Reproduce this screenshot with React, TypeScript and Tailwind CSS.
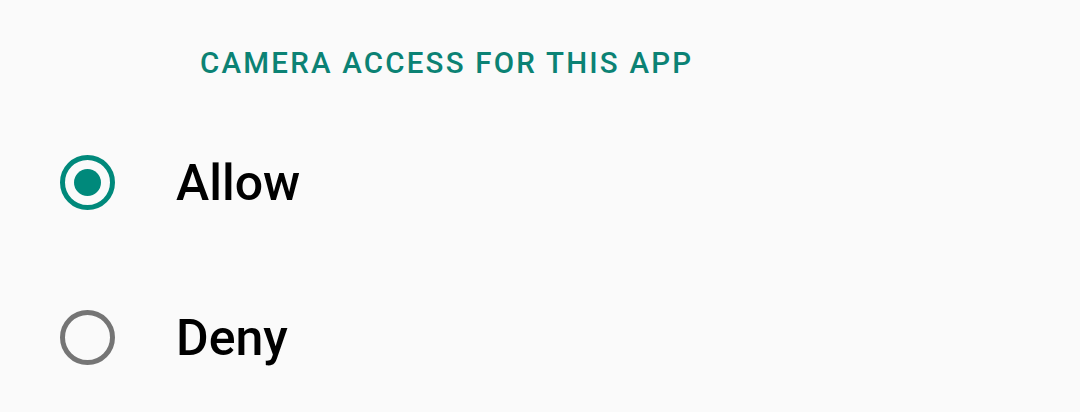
import React from "react";

type Option = { label: string; value: string };

const options: Option[] = [
  { label: "Allow", value: "allow" },
  { label: "Deny", value: "deny" },
];

const Radio = ({ checked }: { checked: boolean }) => (
  <span
    className={`flex h-[55px] w-[55px] items-center justify-center rounded-full border-[5.5px] ${
      checked ? "border-[#00897b]" : "border-[#757575]"
    }`}
  >
    {checked && <span className="h-[27px] w-[27px] rounded-full bg-[#00897b]" />}
  </span>
);

const App = () => {
  const [selected, setSelected] = React.useState("allow");

  return (
    <div className="h-[412px] w-[1080px] overflow-hidden bg-[#fafafa] font-['Roboto',sans-serif]">
      <h2 className="pl-[200px] pt-[46px] text-[29.5px] font-medium uppercase leading-[34px] tracking-[0.075em] text-[#0b8274]">
        Camera access for this app
      </h2>
      <div className="mt-[25px] flex flex-col">
        {options.map((opt) => (
          <button
            key={opt.value}
            className="flex h-[155px] items-center gap-[61px] pl-[60px] text-left"
            onClick={() => setSelected(opt.value)}
          >
            <Radio checked={selected === opt.value} />
            <span className="text-[50px] font-medium leading-none text-black">{opt.label}</span>
          </button>
        ))}
      </div>
    </div>
  );
};

export default App;
